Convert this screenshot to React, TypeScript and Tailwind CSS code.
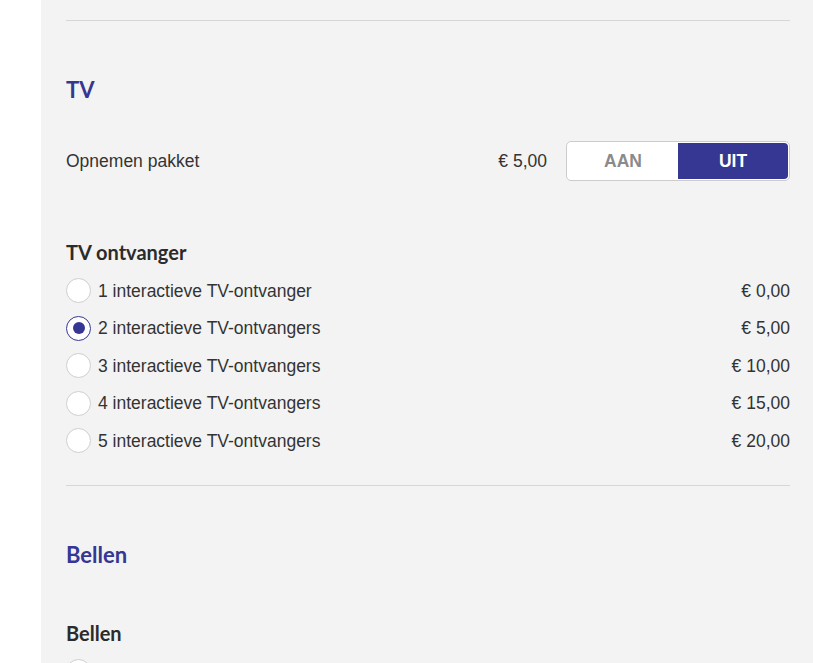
import { useState } from 'react'

const receivers = [
  { id: 1, label: '1 interactieve TV-ontvanger', price: '€ 0,00' },
  { id: 2, label: '2 interactieve TV-ontvangers', price: '€ 5,00' },
  { id: 3, label: '3 interactieve TV-ontvangers', price: '€ 10,00' },
  { id: 4, label: '4 interactieve TV-ontvangers', price: '€ 15,00' },
  { id: 5, label: '5 interactieve TV-ontvangers', price: '€ 20,00' },
]

function Radio({ checked }: { checked: boolean }) {
  return (
    <span
      className={
        checked
          ? 'flex h-[25px] w-[25px] shrink-0 items-center justify-center rounded-full border-[1.5px] border-[#363693] bg-white'
          : 'flex h-[25px] w-[25px] shrink-0 items-center justify-center rounded-full border border-[#cfcfcf] bg-white'
      }
    >
      {checked && <span className="h-[12px] w-[12px] rounded-full bg-[#363693]" />}
    </span>
  )
}

export default function App() {
  const [recording, setRecording] = useState(false)
  const [receiver, setReceiver] = useState(2)

  return (
    <div className="min-h-[663px] bg-white font-['Liberation_Sans',Arial,sans-serif] text-[17.5px] text-[#333]">
      <div className="ml-[41px] min-h-[663px] bg-[#f3f3f3] pl-[25px] pr-[23px] pt-[20px]">
        <div className="border-t border-[#d6d6d6]" />

        {/* TV */}
        <h2 className="mt-[55px] font-['Lato',sans-serif] text-[22px] font-bold leading-[28px] text-[#363693]">
          TV
        </h2>

        <div className="mt-[37px] flex items-center justify-between">
          <span>Opnemen pakket</span>
          <div className="flex items-center gap-[19px]">
            <span>€ 5,00</span>
            <div className="flex h-[40px] w-[224px] rounded-[5px] border border-[#cccccc] bg-white p-px">
              <button
                onClick={() => setRecording(true)}
                className={
                  recording
                    ? 'flex-1 rounded-l-[4px] bg-[#363693] font-bold text-white'
                    : 'flex-1 font-bold text-[#8a8a8a]'
                }
              >
                AAN
              </button>
              <button
                onClick={() => setRecording(false)}
                className={
                  recording
                    ? 'flex-1 font-bold text-[#8a8a8a]'
                    : 'flex-1 rounded-r-[4px] bg-[#363693] font-bold text-white'
                }
              >
                UIT
              </button>
            </div>
          </div>
        </div>

        <h3 className="mt-[59px] font-['Lato',sans-serif] text-[20px] font-bold leading-[24px] text-[#2b2b2b]">
          TV ontvanger
        </h3>
        <div className="mt-[8px]">
          {receivers.map((r) => (
            <label
              key={r.id}
              onClick={() => setReceiver(r.id)}
              className="flex h-[37.5px] cursor-pointer items-center justify-between"
            >
              <span className="flex items-center gap-[7px]">
                <Radio checked={receiver === r.id} />
                <span>{r.label}</span>
              </span>
              <span>{r.price}</span>
            </label>
          ))}
        </div>

        <div className="mt-[25px] border-t border-[#d6d6d6]" />

        {/* Bellen */}
        <h2 className="mt-[55px] font-['Lato',sans-serif] text-[22px] font-bold leading-[28px] text-[#363693]">
          Bellen
        </h2>

        <h3 className="mt-[52px] font-['Lato',sans-serif] text-[20px] font-bold leading-[24px] text-[#2b2b2b]">
          Bellen
        </h3>
        <div className="mt-[8px]">
          <div className="flex h-[37.5px] items-center">
            <Radio checked={false} />
          </div>
        </div>
      </div>
    </div>
  )
}
